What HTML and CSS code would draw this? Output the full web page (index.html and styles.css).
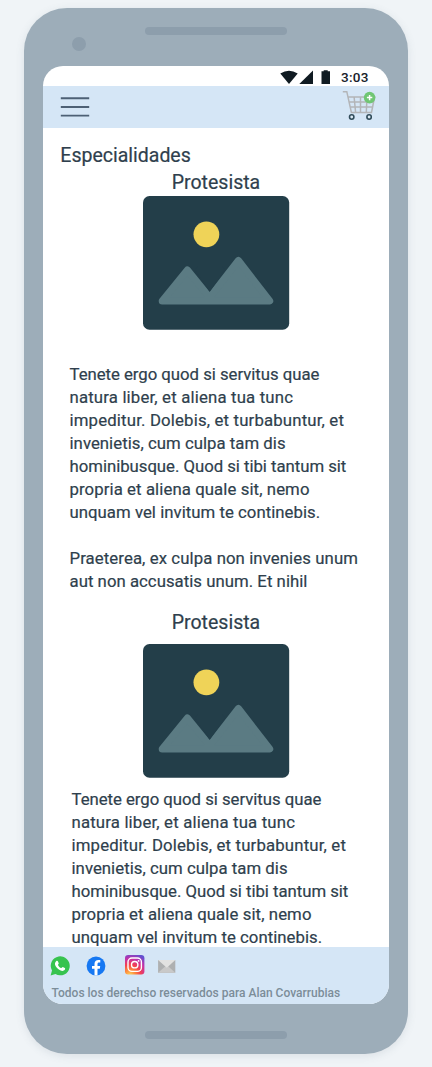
FILE: index.html
```html
<!DOCTYPE html>
<html lang="es">
<head>
<meta charset="utf-8">
<title>Especialidades</title>
<link rel="stylesheet" href="styles.css">
</head>
<body>
<svg class="defs" aria-hidden="true">
  <defs>
    <radialGradient id="insta" cx="0.25" cy="1.05" r="1.15">
      <stop offset="0" stop-color="#ffd65c"/>
      <stop offset="0.25" stop-color="#fd8a3c"/>
      <stop offset="0.48" stop-color="#f5414d"/>
      <stop offset="0.75" stop-color="#c430a8"/>
      <stop offset="1" stop-color="#6250d0"/>
    </radialGradient>
    <symbol id="picture" viewBox="0 0 147 134">
      <rect width="146.2" height="133.7" rx="6.5" fill="#233e49"/>
      <circle cx="63.4" cy="38.3" r="12.9" fill="#efd358"/>
      <path d="M19.2 105 44.4 74 66.7 101.5 95.4 64.5 126.7 105Z" fill="#5b7b83" stroke="#5b7b83" stroke-width="7" stroke-linejoin="round"/>
      <path d="M52 74 66.7 95.8 82 74 79 70 55 70Z" fill="#233e49"/>
    </symbol>
  </defs>
</svg>
<div class="phone">
  <div class="phone-top">
    <span class="speaker"></span>
    <span class="camera"></span>
  </div>
  <div class="screen">
    <div class="status">
      <svg class="signals" viewBox="0 0 52 16" width="52" height="16">
        <path d="M.3 3.4Q9-1.8 17.7 3.4L9 14Z" fill="#101b22"/>
        <path d="M33 .5V14H19.3Z" fill="#101b22"/>
        <path d="M41.5 1.2h2.2V.3h4v.9H50V14h-8.5Z" fill="#101b22"/>
      </svg>
      <span class="time">3:03</span>
    </div>
    <header class="bar">
      <svg class="menu" viewBox="0 0 30 22" width="30" height="22">
        <path d="M.8 2.3h28.4M.8 11h28.4M.8 19.6h28.4" stroke="#4d6075" stroke-width="1.9"/>
      </svg>
      <svg class="cart" viewBox="0 0 35 30" width="35" height="30">
        <g fill="none" stroke="#b3b5b8" stroke-width="1.5">
          <path d="M.8 1.7h4L9.4 22.5H29.5L32.6 6.9H6M7.2 12H31.5M8.3 17H30.6M12.1 6.9l1.5 15.6M18.5 6.9v15.6M25 6.9l-.7 15.6"/>
        </g>
        <circle cx="9.7" cy="27" r="2.2" fill="#dcebf5" stroke="#314c5a" stroke-width="1.6"/>
        <circle cx="27.1" cy="27" r="2.2" fill="#dcebf5" stroke="#314c5a" stroke-width="1.6"/>
        <circle cx="27.6" cy="7.6" r="5.8" fill="#70c674"/>
        <path d="M24.9 7.6h5.4M27.6 4.9v5.4" stroke="#fff" stroke-width="1.5"/>
      </svg>
    </header>
    <main class="content">
      <h1 class="page-title">Especialidades</h1>
      <section class="first">
        <h2 class="name">Protesista</h2>
        <svg class="photo"><use href="#picture"/></svg>
        <p class="text"><span class="tight">Tenete ergo quod si servitus quae</span><br><span class="loose">natura liber, et aliena tua tunc</span><br><span class="loose">impeditur. Dolebis, et turbabuntur, et</span><br>invenietis, cum culpa tam dis<br><span class="tight">hominibusque. Quod si tibi tantum sit</span><br><span class="wide">propria et aliena quale sit, nemo</span><br>unquam vel invitum te continebis.<br><br><span class="wide">Praeterea, ex culpa non invenies unum</span><br>aut non accusatis unum. Et nihil</p>
      </section>
      <section class="second">
        <h2 class="name">Protesista</h2>
        <svg class="photo"><use href="#picture"/></svg>
        <p class="text"><span class="tight">Tenete ergo quod si servitus quae</span><br><span class="loose">natura liber, et aliena tua tunc</span><br><span class="loose">impeditur. Dolebis, et turbabuntur, et</span><br>invenietis, cum culpa tam dis<br><span class="tight">hominibusque. Quod si tibi tantum sit</span><br><span class="wide">propria et aliena quale sit, nemo</span><br>unquam vel invitum te continebis.</p>
      </section>
    </main>
    <footer class="footer">
      <div class="social">
        <svg class="whatsapp" viewBox="0 0 20 20" width="20" height="20">
          <path d="M.6 19.5 2 14.6A9.5 9.5 0 1 1 5.5 18.1Z" fill="#37c34f"/>
          <path d="M6.1 5.2C7 4.5 7.6 4.7 8 5.5l.7 1.8c.2.6-.8 1.2-.7 1.6.6 1.6 1.8 2.6 3.3 3.2.5.1 1-1.2 1.5-1l2 .9c.6.3.3 1.5-.2 2.1-1 1.1-2.7 1-4.5.2C7.3 13 5.4 10.4 5 8.5 4.8 7.2 5.3 5.9 6.1 5.2Z" fill="#fff"/>
        </svg>
        <svg class="facebook" viewBox="0 0 20 20" width="20" height="20">
          <circle cx="10" cy="10" r="9.4" fill="#1778f2"/>
          <path d="M8.5 19.3V12.7H6V10h2.5V8c0-2.7 1.5-4.1 3.9-4.1l1.9.2v2.3h-1.2c-1.2 0-1.6.7-1.6 1.5V10h2.7l-.4 2.7h-2.3v6.6a9.4 9.4 0 0 1-3 0Z" fill="#fff"/>
        </svg>
        <svg class="instagram" viewBox="0 0 20 20" width="20" height="20">
          <rect width="19.4" height="19.4" rx="3.2" fill="url(#insta)"/>
          <rect x="3" y="3" width="13.4" height="13.4" rx="4" fill="none" stroke="#fff" stroke-width="1.4"/>
          <circle cx="9.7" cy="9.7" r="3.2" fill="none" stroke="#fff" stroke-width="1.4"/>
          <circle cx="13.6" cy="5.9" r=".9" fill="#fff"/>
        </svg>
        <svg class="mail" viewBox="0 0 18 13" width="18" height="13">
          <rect x=".1" y=".1" width="17.2" height="12.7" fill="#aeb0b1"/>
          <path d="M.1 12.8 8.8 5l8.5 7.8Z" fill="#c9c9c9"/>
          <path d="M.1.1h17.2L8.8 7.8Z" fill="#e2e2e1"/>
        </svg>
      </div>
      <p class="rights">Todos los derechso reservados para Alan Covarrubias</p>
    </footer>
  </div>
  <div class="phone-bottom"><span class="speaker"></span></div>
</div>
</body>
</html>
```
FILE: styles.css
```css
* { box-sizing: border-box; }
body {
  margin: 0;
  padding: 8px 24px 13px;
  height: 1067px;
  background: #f0f4f7;
  color: #2f3f4d;
  font-family: Roboto, "Liberation Sans", sans-serif;
  overflow: hidden;
}
svg { display: block; flex: none; }
.defs { position: absolute; width: 0; height: 0; }
.phone {
  width: 384px;
  height: 1046px;
  padding: 0 19px;
  border-radius: 43px;
  background: #9dadb9;
  box-shadow: 0 2px 8px rgba(80, 100, 115, 0.13);
}
.phone-top { height: 58px; padding-top: 19px; }
.speaker {
  display: block;
  width: 142px;
  height: 8px;
  margin: 0 auto;
  border-radius: 4px;
  background: #8d9eac;
}
.camera {
  display: block;
  width: 14px;
  height: 14px;
  margin: 2px 0 0 29px;
  border-radius: 50%;
  background: #8d9eac;
}
.screen {
  display: flex;
  flex-direction: column;
  height: 938px;
  width: 346px;
  border-radius: 20px;
  background: #fff;
  overflow: hidden;
}
.status {
  display: flex;
  justify-content: flex-end;
  height: 20px;
  padding: 4px 20px 0 0;
  flex: none;
}
.signals { margin-right: 9px; }
.time {
  width: 28px;
  color: #17212a;
  font-size: 13.5px;
  font-weight: 500;
  line-height: 15px;
  letter-spacing: 0.3px;
  white-space: nowrap;
}
.bar {
  display: flex;
  justify-content: space-between;
  height: 42px;
  padding: 4px 12px 0 17px;
  flex: none;
  background: #d5e6f6;
}
.menu { margin-top: 6px; }
.content { flex: 1; min-height: 0; overflow: hidden; }
.page-title, .name {
  margin: 0;
  font-size: 19.5px;
  font-weight: 400;
  line-height: 26px;
  letter-spacing: 0;
  -webkit-text-stroke: 0.2px #2f3f4d;
}
.page-title { padding: 15px 0 0 17.3px; }
.name { padding-top: 1px; text-align: center; }
.photo { width: 147px; height: 134px; margin: 0 0 0 100px; }
.text {
  margin: 0;
  font-size: 16.75px;
  line-height: 23px;
  letter-spacing: 0.03px;
  white-space: nowrap;
  -webkit-text-stroke: 0.2px #2f3f4d;
}
.tight { letter-spacing: -0.03px; }
.wide { letter-spacing: 0.09px; }
.loose { letter-spacing: 0.17px; }
.first .text { padding: 33px 0 0 26.5px; }
.second { padding-top: 16px; }
.second .name { padding-bottom: 8px; }
.second .text { padding: 10px 0 0 28.5px; }
.footer {
  height: 57px;
  padding: 8px 0 0 7px;
  flex: none;
  background: #d5e6f6;
}
.social { display: flex; height: 22px; }
.whatsapp { margin-top: 1px; }
.facebook { margin: 1px 0 0 16px; }
.instagram { margin-left: 19px; }
.mail { margin: 5px 0 0 13px; }
.rights {
  margin: 0;
  padding: 9px 0 0 1.5px;
  color: #7c8d99;
  font-size: 12px;
  font-weight: 500;
  line-height: 14px;
  white-space: nowrap;
}
.phone-bottom { padding-top: 27px; }
```
